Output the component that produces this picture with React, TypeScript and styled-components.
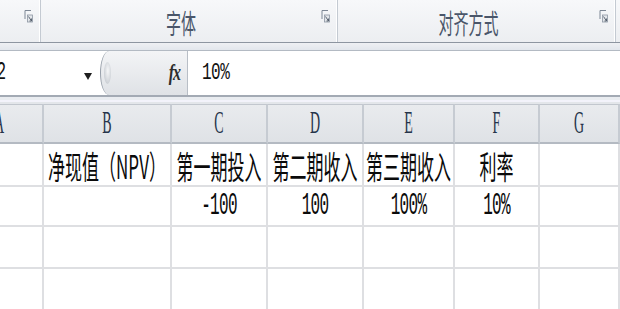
import styled, { createGlobalStyle } from "styled-components";

const GlobalStyle = createGlobalStyle`
  html, body {
    margin: 0;
    padding: 0;
    background: #ffffff;
  }
  body {
    width: 620px;
    height: 309px;
    overflow: hidden;
    font-family: "Noto Sans CJK SC", sans-serif;
  }
`;

const columns = [
  { key: "A", width: 88 },
  { key: "B", width: 128 },
  { key: "C", width: 96 },
  { key: "D", width: 96 },
  { key: "E", width: 91 },
  { key: "F", width: 85 },
  { key: "G", width: 80 },
];

const gridTemplate = columns.map((c) => `${c.width}px`).join(" ");

const rows = [
  { height: 43, cells: ["", "净现值（NPV）", "第一期投入", "第二期收入", "第三期收入", "利率", ""] },
  { height: 40, cells: ["", "", "-100", "100", "100%", "10%", ""] },
  { height: 42, cells: [] as string[] },
  { height: 42, cells: [] as string[] },
];

const groups = [
  { label: "", width: 41 },
  { label: "字体", width: 297 },
  { label: "对齐方式", width: 278 },
  { label: "", width: 40 },
];

const Window = styled.div`
  width: 620px;
  height: 309px;
  overflow: hidden;
  display: flex;
  flex-direction: column;
  background: #fff;
`;

const Ribbon = styled.div`
  display: flex;
  height: 42px;
  flex: none;
  background: linear-gradient(#f7f8fa, #eceef1);
  border-bottom: 1px solid #8d95a0;
`;

const Group = styled.div<{ $width: number }>`
  flex: none;
  width: ${(p) => p.$width}px;
  display: flex;
  align-items: center;
  border-right: 1px solid #c4cad2;
  box-shadow: inset -1px 0 0 #ffffff;
  box-sizing: border-box;
`;

const GroupLabel = styled.span`
  flex: 1;
  text-align: center;
  font-size: 15px;
  color: #4a566a;
  display: inline-block;
  transform: scaleY(1.85);
`;

const Launcher = styled.svg`
  flex: none;
  width: 9px;
  height: 14px;
  align-self: flex-start;
  margin: 9px 7px 0 0;
`;

const Band = styled.div<{ $height: number }>`
  flex: none;
  height: ${(p) => p.$height}px;
  background: linear-gradient(#eef0f3, #e2e6ec);
  border-bottom: 1px solid #b3bac3;
  box-sizing: border-box;
`;

const LowerBand = styled.div`
  flex: none;
  height: 9px;
  box-sizing: border-box;
  border-top: 2px solid #a3aab4;
  background: linear-gradient(#e9ecf0 0 40%, #f3f3fb 40% 70%, #e3e6ea 70%);
`;

const Sheet = styled.div`
  margin-left: -44px;
  display: flex;
  flex-direction: column;
`;

const FormulaBar = styled.div`
  display: flex;
  height: 44px;
  flex: none;
  background: #fff;
`;

const NameBox = styled.div`
  width: 144px;
  flex: none;
  display: flex;
  align-items: center;
  padding-left: 31px;
  box-sizing: border-box;
`;

const NameText = styled.span`
  flex: 1;
  font-family: "Liberation Mono", monospace;
  font-size: 16px;
  color: #111;
  display: inline-block;
  transform: scaleY(1.6);
  transform-origin: left center;
`;

const DropArrow = styled.span`
  width: 0;
  height: 0;
  margin: 6px 8px 0 0;
  border-left: 4px solid transparent;
  border-right: 4px solid transparent;
  border-top: 7px solid #1e1e1e;
`;

const FxBox = styled.div`
  width: 88px;
  flex: none;
  display: flex;
  align-items: center;
  box-sizing: border-box;
  background: linear-gradient(#f3f4f6, #dfe2e6);
  border-left: 1px solid #98a0aa;
  border-right: 1px solid #b8bec6;
  border-radius: 9px 0 0 9px / 22px 0 0 22px;
`;

const Grip = styled.span`
  width: 7px;
  height: 22px;
  margin-left: 3px;
  border-radius: 50%;
  background: radial-gradient(ellipse at 55% 40%, #f6f7f8, #c3c8ce 85%);
`;

const Fx = styled.span`
  margin-left: auto;
  margin-right: 7px;
  font-family: "Liberation Serif", serif;
  font-style: italic;
  font-weight: bold;
  font-size: 16px;
  color: #2d2d2d;
  display: inline-block;
  transform: scaleY(1.45);
  letter-spacing: -1px;
`;

const FormulaInput = styled.div`
  flex: 1;
  display: flex;
  align-items: center;
  padding-left: 14px;
`;

const FormulaText = styled.span`
  font-family: "Liberation Mono", monospace;
  font-size: 16px;
  color: #111;
  letter-spacing: -0.5px;
  display: inline-block;
  transform: scaleY(1.5);
`;

const GridRow = styled.div<{ $height: number }>`
  display: grid;
  grid-template-columns: ${gridTemplate};
  height: ${(p) => p.$height}px;
  flex: none;
`;

const HeaderCell = styled.div`
  display: flex;
  align-items: center;
  justify-content: center;
  background: linear-gradient(#e9ebee, #dfe2e6);
  border-right: 2px solid #c6cbd2;
  border-top: 1px solid #c2c7ce;
  border-bottom: 2px solid #b4bac2;
  box-sizing: border-box;
`;

const HeaderLetter = styled.span`
  font-family: "Liberation Serif", serif;
  font-size: 14px;
  color: #26344a;
  display: inline-block;
  transform: scaleY(2.2);
`;

const Cell = styled.div`
  display: flex;
  align-items: center;
  justify-content: center;
  white-space: nowrap;
  border-right: 2px solid #dedfe2;
  border-bottom: 2px solid #dedfe2;
  box-sizing: border-box;
`;

const CellText = styled.span<{ $num?: boolean }>`
  display: inline-block;
  color: #0a0a0a;
  font-family: ${(p) =>
    p.$num ? `"Liberation Mono", monospace` : `"Noto Sans CJK SC", sans-serif`};
  font-size: ${(p) => (p.$num ? 16 : 17)}px;
  letter-spacing: ${(p) => (p.$num ? "-0.7px" : "0")};
  transform: scaleY(${(p) => (p.$num ? 2 : 1.9)});
`;

function LauncherIcon() {
  return (
    <Launcher viewBox="0 0 9 14">
      <path d="M1 1.5 H7 M1 1.5 V10" stroke="#7d8795" strokeWidth="1" fill="none" />
      <rect x="3.5" y="6" width="5" height="7" fill="#e3e6ea" stroke="#8d96a3" strokeWidth="0.8" />
      <path d="M4.5 7.5 L7.5 12 M7.5 12 H5.5 M7.5 12 V9.5" stroke="#4f5968" strokeWidth="0.9" fill="none" />
    </Launcher>
  );
}

export default function App() {
  return (
    <Window>
      <GlobalStyle />
      <Ribbon>
        {groups.map((g, i) => (
          <Group key={i} $width={g.width}>
            <GroupLabel>{g.label}</GroupLabel>
            {i < 3 && <LauncherIcon />}
          </Group>
        ))}
      </Ribbon>
      <Band $height={8} />
      <Sheet>
        <FormulaBar>
          <NameBox>
            <NameText>F2</NameText>
            <DropArrow />
          </NameBox>
          <FxBox>
            <Grip />
            <Fx>fx</Fx>
          </FxBox>
          <FormulaInput>
            <FormulaText>10%</FormulaText>
          </FormulaInput>
        </FormulaBar>
        <LowerBand />
        <GridRow $height={40}>
          {columns.map((c) => (
            <HeaderCell key={c.key}>
              <HeaderLetter>{c.key}</HeaderLetter>
            </HeaderCell>
          ))}
        </GridRow>
        {rows.map((r, ri) => (
          <GridRow key={ri} $height={r.height}>
            {columns.map((c, ci) => {
              const value = r.cells[ci] ?? "";
              return (
                <Cell key={c.key}>
                  {value && <CellText $num={/^[-\d%]+$/.test(value)}>{value}</CellText>}
                </Cell>
              );
            })}
          </GridRow>
        ))}
      </Sheet>
    </Window>
  );
}
